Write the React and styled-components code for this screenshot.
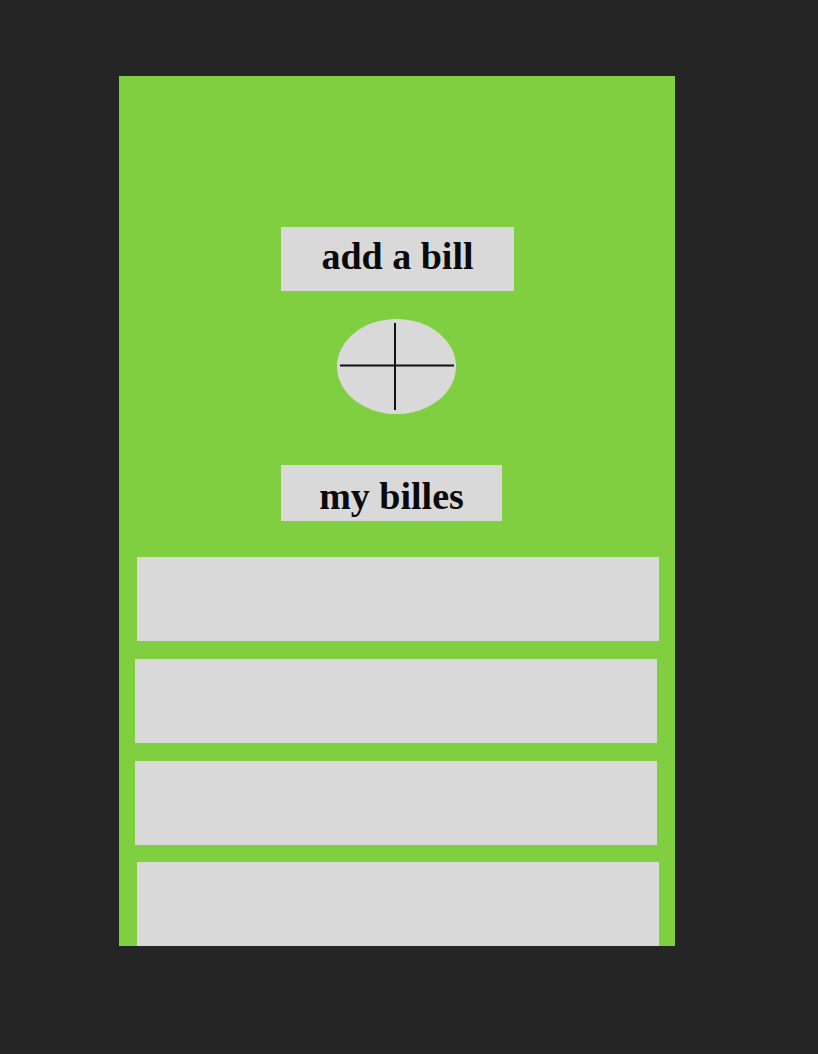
import React from 'react';
import styled, { createGlobalStyle } from 'styled-components';

const GlobalStyle = createGlobalStyle`
  html, body {
    margin: 0;
    padding: 0;
    background: #252525;
  }
  body {
    font-family: "Liberation Serif", "Times New Roman", serif;
    min-height: 1054px;
  }
`;

const Page = styled.div`
  padding: 76px 0 0 119px;
`;

const Panel = styled.main`
  width: 556px;
  height: 870px;
  background: #80cf41;
  display: flex;
  flex-direction: column;
  align-items: center;
  padding-top: 151px;
  box-sizing: border-box;
  overflow: hidden;
`;

const Label = styled.div`
  width: ${p => p.$width}px;
  height: ${p => p.$height}px;
  margin-left: ${p => p.$shift || 0}px;
  background: #d9d9d9;
  display: flex;
  align-items: center;
  justify-content: center;
  box-sizing: border-box;
  padding-top: ${p => p.$padTop || 0}px;
  padding-bottom: ${p => p.$padBottom || 0}px;
  font-size: 38px;
  font-weight: 700;
  color: #0a0a0a;
  white-space: nowrap;
`;

const AddButton = styled.button`
  margin-top: 28px;
  margin-bottom: 51px;
  margin-left: -1px;
  width: 119px;
  height: 95px;
  border-radius: 50%;
  border: none;
  padding: 0;
  background: #d9d9d9;
  display: flex;
  align-items: center;
  justify-content: center;
  cursor: pointer;
`;

const BillList = styled.div`
  align-self: stretch;
  margin-top: 36px;
  display: flex;
  flex-direction: column;
`;

const BillRow = styled.div`
  width: 522px;
  height: 84px;
  flex-shrink: 0;
  background: #d9d9d9;
  margin-left: ${p => p.$offset}px;
  margin-bottom: ${p => p.$gap || 0}px;
`;

const PlusIcon = () => (
  <svg width="119" height="95" viewBox="0 0 119 95">
    <line x1="58" y1="4" x2="58" y2="91" stroke="#111" strokeWidth="2" />
    <line x1="3" y1="46.5" x2="117" y2="46.5" stroke="#111" strokeWidth="2" />
  </svg>
);

const bills = [
  { id: 1, offset: 18, gap: 18 },
  { id: 2, offset: 16, gap: 18 },
  { id: 3, offset: 16, gap: 17 },
  { id: 4, offset: 18, gap: 0 }
];

export default function App() {
  return (
    <>
      <GlobalStyle />
      <Page>
        <Panel>
          <Label $width={233} $height={64} $shift={1} $padBottom={6}>
            add a bill
          </Label>
          <AddButton aria-label="add a bill">
            <PlusIcon />
          </AddButton>
          <Label $width={221} $height={56} $shift={-11} $padTop={5}>
            my billes
          </Label>
          <BillList>
            {bills.map(b => (
              <BillRow key={b.id} $offset={b.offset} $gap={b.gap} />
            ))}
          </BillList>
        </Panel>
      </Page>
    </>
  );
}
